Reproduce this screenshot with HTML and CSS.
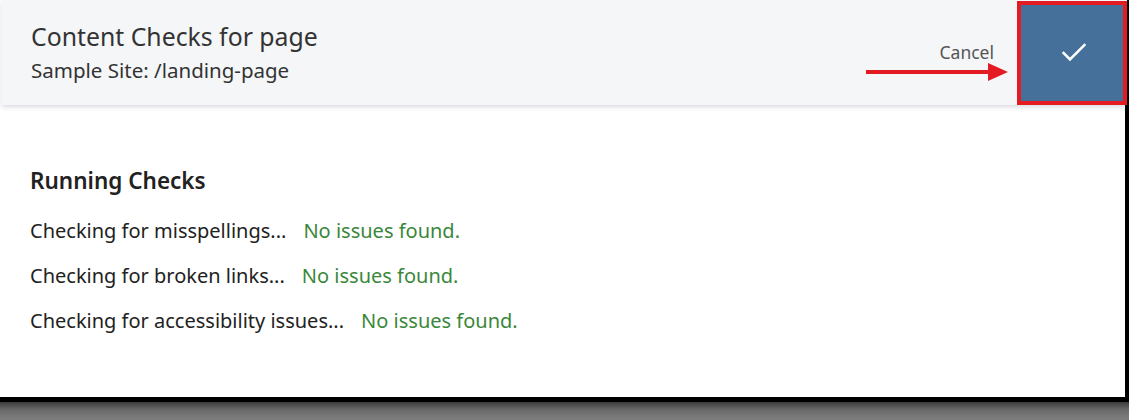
FILE: index.html
```html
<!DOCTYPE html>
<html lang="en">
<head>
<meta charset="utf-8">
<title>Content Checks for page</title>
<link rel="stylesheet" href="styles.css">
</head>
<body>
<div class="dialog">
  <header class="dialog-header">
    <div class="titles">
      <div class="title">Content Checks for page</div>
      <div class="subtitle">Sample Site: /landing-page</div>
    </div>
    <div class="actions">
      <span class="cancel">Cancel</span>
      <button class="confirm" type="button" aria-label="Confirm">
        <svg width="24" height="20" viewBox="0 0 24 20" aria-hidden="true"><polyline points="1.5,10 8,16.5 22.5,2" fill="none" stroke="#fff" stroke-width="2.6" stroke-linecap="square"/></svg>
      </button>
    </div>
    <svg class="annotation-arrow" width="145" height="22" viewBox="0 0 145 22" aria-hidden="true">
      <rect x="0" y="9" width="124" height="4" fill="#e31b23"/>
      <polygon points="122,2 142,11 122,20" fill="#e31b23"/>
    </svg>
  </header>
  <main class="dialog-body">
    <h2 class="section-title">Running Checks</h2>
    <div class="check"><span class="label">Checking for misspellings...</span><span class="result">No issues found.</span></div>
    <div class="check"><span class="label">Checking for broken links...</span><span class="result">No issues found.</span></div>
    <div class="check"><span class="label">Checking for accessibility issues...</span><span class="result">No issues found.</span></div>
  </main>
</div>
</body>
</html>
```

FILE: styles.css
```css
html, body {
  margin: 0;
  padding: 0;
}

body {
  width: 1129px;
  height: 420px;
  overflow: hidden;
  font-family: "Noto Sans", "Open Sans", "Liberation Sans", sans-serif;
  background:
    linear-gradient(to bottom,
      #5b0d2f 0, #5b0d2f 86px,
      #7a7a7a 86px, #7a7a7a 402px,
      #3c3c3c 402px, #6a6a6a 410px, #7b7b7b 418px);
}

.dialog {
  width: 1125px;
  border-right: 4px solid #000;
  border-bottom: 5px solid #000;
  background: #fff;
}

.dialog-header {
  position: relative;
  z-index: 1;
  margin-left: 2px;
  width: 1125px;
  height: 105px;
  box-sizing: border-box;
  background: #f5f6f8;
  display: flex;
  justify-content: space-between;
  align-items: flex-start;
  padding-left: 29px;
  box-shadow: 0 2px 5px rgba(40, 50, 70, 0.18);
}

.titles {
  padding-top: 20px;
}

.title {
  font-size: 24.8px;
  line-height: 32px;
  color: #333;
}

.subtitle {
  margin-top: 4px;
  font-size: 20.5px;
  line-height: 28px;
  color: #333;
}

.actions {
  display: flex;
  align-items: flex-start;
  height: 105px;
}

.cancel {
  padding-top: 40px;
  margin-right: 23px;
  font-size: 17.5px;
  line-height: 24px;
  color: #555;
}

.confirm {
  margin: 1px 0 0;
  width: 110px;
  height: 104px;
  box-sizing: border-box;
  border: 4px solid #e31b23;
  background: #44709a;
  padding: 0;
  display: flex;
  align-items: center;
  justify-content: center;
  cursor: pointer;
}

.confirm svg {
  display: block;
  margin-left: 4px;
}

.annotation-arrow {
  position: absolute;
  left: 864px;
  top: 61px;
}

.dialog-body {
  height: 292px;
  box-sizing: border-box;
  padding: 61px 30px 0;
  color: #222;
}

.section-title {
  margin: 0 0 23px;
  font-size: 22.5px;
  line-height: 30px;
  font-weight: 600;
}

.check {
  font-size: 20px;
  line-height: 24px;
  margin-bottom: 21px;
  display: flex;
}

.label {
  margin-right: 17px;
}

.result {
  color: #3a873a;
}
```
